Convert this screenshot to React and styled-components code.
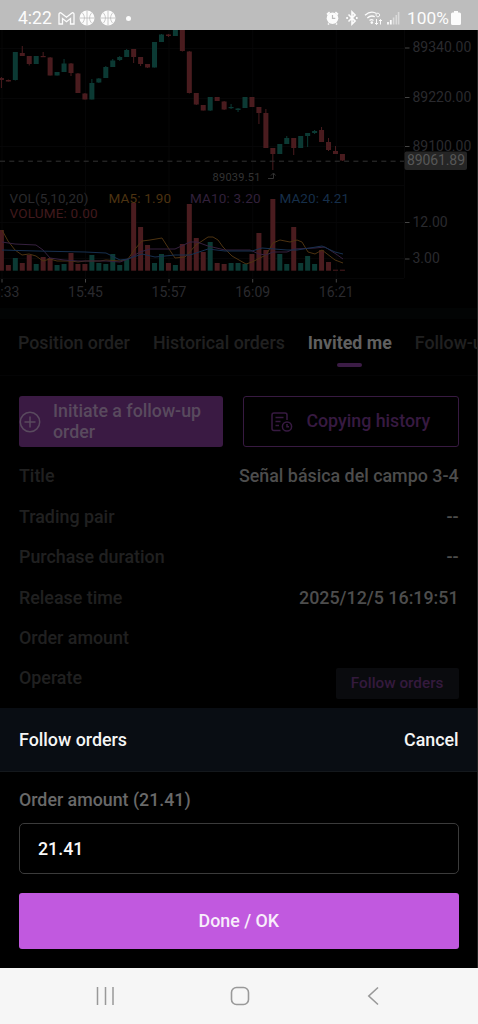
import React from 'react'
import styled, { createGlobalStyle } from 'styled-components'

const green = '#0c3a34'
const red = '#4a1c1f'

// [color, open, close, wick top, wick bottom, volume top]
const candles = [
  ['r', 78, 80, 77, 88, 230],
  ['r', 80, 81.5, 79.5, 81.5, 265],
  ['g', 52, 80, 52, 80.5, 258],
  ['r', 53, 56, 46, 56, 263],
  ['r', 56, 64, 56, 65.5, 255],
  ['g', 56, 64, 56, 64, 264],
  ['r', 56, 57.2, 52, 57, 257],
  ['r', 57.5, 75.5, 57, 75.5, 258],
  ['g', 72, 75.5, 72, 75.5, 265],
  ['g', 63.5, 72, 59, 72, 264],
  ['r', 63.5, 73, 63, 76, 253],
  ['r', 73.5, 93, 73, 93, 264],
  ['r', 93.5, 99.5, 93, 99.5, 264],
  ['g', 83, 99.5, 79, 99.5, 255],
  ['g', 78.5, 82.5, 78, 83, 263],
  ['g', 67, 78, 66, 78, 264],
  ['g', 60.5, 67, 59, 67, 254],
  ['g', 57, 60, 56, 61, 265],
  ['g', 50, 57, 49, 57, 259],
  ['r', 49, 57, 49, 63, 203],
  ['r', 57, 64, 57, 66, 227],
  ['r', 64, 67.5, 64, 68, 245],
  ['g', 42, 67.5, 42, 67.5, 263],
  ['g', 34.5, 42, 34, 42, 254],
  ['r', 34.5, 36, 34, 37, 263],
  ['g', 30, 36, 30, 36, 265],
  ['r', 30, 51, 30, 51.5, 244],
  ['r', 51.5, 93, 51, 93.5, 204],
  ['r', 93, 104.5, 93, 105, 238],
  ['r', 105, 110.5, 105, 110.5, 252],
  ['g', 97, 110.5, 97, 111, 242],
  ['r', 97, 101, 97, 101, 263],
  ['r', 101.5, 109.5, 101, 110, 264],
  ['g', 107, 108.2, 104, 109, 263],
  ['g', 108.5, 110, 108, 112, 263],
  ['g', 97, 108, 97, 108, 264],
  ['r', 97, 107, 97, 107, 254],
  ['r', 107, 113, 107, 124, 233],
  ['r', 113, 148, 109, 148, 250],
  ['r', 148, 154, 148, 170, 199],
  ['g', 144, 154, 144, 154, 254],
  ['g', 138, 144, 136, 144, 264],
  ['r', 138, 148, 138, 155, 227],
  ['g', 136, 148, 136, 148, 263],
  ['g', 133, 136, 133, 147, 256],
  ['g', 131, 133, 130, 134, 264],
  ['r', 130, 142, 127, 142, 250],
  ['r', 142, 150, 138, 151, 262],
  ['r', 151, 154, 146, 154, 269.7],
  ['r', 154, 160.5, 154, 161, 269.7],
]

const priceLabels = [
  { y: 47, text: '89340.00' },
  { y: 96.5, text: '89220.00' },
  { y: 145.5, text: '89100.00' },
  { y: 221.5, text: '12.00' },
  { y: 258, text: '3.00' },
]

const timeLabels = [
  { x: 2, text: '15:33' },
  { x: 85.5, text: '15:45' },
  { x: 169, text: '15:57' },
  { x: 252.7, text: '16:09' },
  { x: 336.3, text: '16:21' },
]

const ma5 = '2,230 8,241 15,250 22,255 29,254 36,256 43,261 50,259 57,261 71,261 78,262 85,261 100,261 106,260 120,261 128,259 135,249 142,241 150,240 162,238 169,249 175,258 185,257 196,245 208,237 213,237 218,240 223,247 232,256 246,264 252,262 266,255 273,243 280,240 290,242 297,240 302,242 308,252 315,254 322,250 335,260 343,263'
const ma10 = '2,242 15,244 36,245 43,250 50,258 64,260 78,261 106,261 120,262 128,259 140,252 150,249 175,249 190,242 197,242 208,246 225,250 250,250 259,254 266,255 273,252 287,252 294,249 315,248 325,247 336,254 343,259'
const ma20 = '2,250 36,251 85,252 106,253 120,260 128,259 142,254 155,257 175,255 190,255 208,249 225,251 252,251 262,248 287,250 297,250 310,248 322,246 335,252 343,254'

const tabs = [
  { title: 'Position order' },
  { title: 'Historical orders' },
  { title: 'Invited me', active: true },
  { title: 'Follow-up' },
]

const details = [
  { label: 'Title', value: 'Señal básica del campo 3-4' },
  { label: 'Trading pair', value: '--' },
  { label: 'Purchase duration', value: '--' },
  { label: 'Release time', value: '2025/12/5 16:19:51' },
  { label: 'Order amount', value: '' },
]

function Ball() {
  return (
    <svg width="16" height="16" viewBox="0 0 16 16">
      <circle cx="8" cy="8" r="7.5" fill="#fcfcfc" />
      <path
        d="M8 .5v15M.5 8h15M3 2.6c3.2 3 3.2 7.8 0 10.8M13 2.6c-3.2 3-3.2 7.8 0 10.8"
        fill="none"
        stroke="#bdbdbd"
        strokeWidth="0.8"
      />
    </svg>
  )
}

function StatusIcons() {
  return (
    <svg width="78" height="18" viewBox="326 9 78 18" fill="none" stroke="#fcfcfc">
      {/* alarm */}
      <circle cx="332.5" cy="18.2" r="5.8" fill="#fcfcfc" stroke="none" />
      <path d="M327 14.500l2.600-2.300M338 14.500l-2.600-2.300M329 23.500l-1 1M336 23.500l1 1" strokeWidth="1.7" />
      <path d="M332.500 15v3.400h2.800" stroke="#bdbdbd" strokeWidth="1.2" />
      {/* bluetooth */}
      <path d="M348.500 14.500l6.600 6.600-3.100 3v-12.200l3.100 3-6.600 6.600" strokeWidth="1.6" />
      <path d="M346.300 18h1.600M356 18h1.600" strokeWidth="1.8" />
      {/* wifi */}
      <path d="M365 15.300c4-3.700 8.500-3.700 11.500-1.800M367.300 18c2.600-2.300 5.500-2.300 7.500-1.200M369.500 20.600c1.300-1.100 2.800-1.100 4-.2" strokeWidth="1.3" />
      <circle cx="371.8" cy="22.6" r="1.3" fill="#fcfcfc" stroke="none" />
      <path d="M377.800 16.800a1.800 1.800 0 1 1 .1 0zM376.500 19v5.500M374.900 22.900l1.600 1.600 1.600-1.600M380.500 24.500v-5M379 21l1.500-1.500 1.500 1.500" strokeWidth="1" />
      {/* signal */}
      <path d="M388 24.500v-2.500M390.800 24.500v-4.500" strokeWidth="1.8" />
      <path d="M393.600 24.500v-7M396.300 24.500v-9.500M398.600 24.500v-12.500" strokeWidth="1.6" opacity="0.45" />
    </svg>
  )
}

function Chart() {
  return (
    <ChartSvg viewBox="0 30 478 278">
      <g stroke="#060607">
        <path d="M2 30V278M85.500 30V278M169 30V278M252.700 30V278M336.300 30V278M404.500 30V278" />
        <path d="M0 48.500H404M0 98.500H404M0 146.500H404M0 185.500H404M0 222.500H404M0 258.500H404M0 278.500H404" />
      </g>
      {candles.map(([color, top, bottom, high, low, vol], i) => {
        const x = 1.4 + i * 6.96
        return (
          <g key={i} fill={color === 'g' ? green : red}>
            <rect x={x - 2.5} y={top} width="5" height={bottom - top} />
            <rect x={x - 0.5} y={high} width="1" height={low - high} />
            <rect x={x - 2.5} y={vol} width="5" height={270.7 - vol} />
          </g>
        )
      })}
      <g fill="none" strokeLinejoin="round">
        <polyline points={ma5} stroke="#4d3311" />
        <polyline points={ma10} stroke="#36213f" />
        <polyline points={ma20} stroke="#17304f" />
      </g>
      <path d="M0 161.200H404" stroke="#333" strokeDasharray="5 4.300" />
      <g fontSize="14" fill="#2a2a2e">
        {priceLabels.map(({ y, text }) => (
          <g key={text}>
            <path d={`M405 ${y + 1}h4.500`} stroke="#444" />
            <text x="412.5" y={y + 5.3}>{text}</text>
          </g>
        ))}
        {timeLabels.map(({ x, text }) => (
          <g key={text}>
            <path d={`M${x} 279v3.500`} stroke="#444" />
            <text x={x} y="297.3" textAnchor="middle">{text}</text>
          </g>
        ))}
      </g>
      <g fontSize="13.5">
        <text x="9.5" y="202.8" fill="#2a2a2d" textLength="79">VOL(5,10,20)</text>
        <text x="108.5" y="202.8" fill="#4d3311" textLength="62.5">MA5: 1.90</text>
        <text x="190" y="202.8" fill="#32203b" textLength="70.5">MA10: 3.20</text>
        <text x="279.5" y="202.8" fill="#162f4a" textLength="69.5">MA20: 4.21</text>
        <text x="9.5" y="218.3" fill="#401a1d" textLength="88">VOLUME: 0.00</text>
      </g>
      <text x="212.5" y="181" fontSize="11" fill="#333" textLength="48">89039.51</text>
      <path d="M268 178.500h5.500v-5M271 175.500l2.500-2.500 2 2.500" stroke="#333" fill="none" />
      <rect x="404.5" y="151.5" width="62.5" height="18.5" rx="2" fill="#252525" />
      <text x="407" y="165.3" fontSize="14" fill="#575757" textLength="58">89061.89</text>
    </ChartSvg>
  )
}

function App() {
  return (
    <Phone>
      <GlobalStyle />
      <StatusBar>
        <Clock>4:22</Clock>
        <svg width="17" height="13" viewBox="0 0 17 13">
          <path
            d="M1 12V2.200C1 .8 2.500.4 3.400 1.200l5.100 4 5.100-4c.9-.8 2.400-.4 2.400 1V12h-3.500V6.500l-4 3.200-4-3.200V12z"
            fill="none"
            stroke="#fcfcfc"
            strokeWidth="1.3"
          />
        </svg>
        <Ball />
        <Ball />
        <Dot />
        <StatusRight>
          <StatusIcons />
          <Battery>100%</Battery>
          <svg width="10" height="14" viewBox="0 0 10 14">
            <path d="M3 0h4v1.500h1.500Q10 1.500 10 3v9.500q0 1.500-1.500 1.500h-7Q0 14 0 12.500V3q0-1.500 1.500-1.500H3z" fill="#fcfcfc" />
          </svg>
        </StatusRight>
      </StatusBar>
      <Screen>
        <Chart />
        <Divider />
        <Tabs>
          {tabs.map(({ title, active }) => (
            <Tab key={title} $active={active}>{title}</Tab>
          ))}
        </Tabs>
        <Actions>
          <InitiateButton>
            <svg width="22" height="22" viewBox="0 0 22 22" fill="none" stroke="#594a5e" strokeWidth="1.5">
              <circle cx="11" cy="11" r="9.7" />
              <path d="M11 5.500v11M5.500 11h11" />
            </svg>
            <span>Initiate a follow-up order</span>
          </InitiateButton>
          <HistoryButton>
            <svg width="22" height="20" viewBox="0 0 22 20" fill="none" stroke="#371a41" strokeWidth="1.5">
              <path d="M9.500 18.500H3q-2 0-2-2V3q0-2 2-2h11q2 0 2 2v5M4.500 5.500h8M4.500 9.500h5M4.500 13.500h3.500" />
              <circle cx="16" cy="14.5" r="4.6" />
              <path d="M16 12v2.800h2" />
            </svg>
            <span>Copying history</span>
          </HistoryButton>
        </Actions>
        <Details>
          {details.map(({ label, value }) => (
            <Row key={label}>
              <Label>{label}</Label>
              <Value>{value}</Value>
            </Row>
          ))}
          <Row>
            <Label>Operate</Label>
            <FollowButton>Follow orders</FollowButton>
          </Row>
        </Details>
      </Screen>
      <Sheet>
        <SheetHead>
          <span>Follow orders</span>
          <span>Cancel</span>
        </SheetHead>
        <SheetBody>
          <AmountLabel>Order amount (21.41)</AmountLabel>
          <AmountInput defaultValue="21.41" />
          <DoneButton>Done / OK</DoneButton>
        </SheetBody>
      </Sheet>
      <NavBar>
        <svg width="19" height="20" viewBox="0 0 19 20" stroke="#999" strokeWidth="1.5">
          <path d="M1.500 1v18M9.500 1v18M17 1v18" />
        </svg>
        <svg width="20" height="20" viewBox="0 0 20 20" fill="none" stroke="#999" strokeWidth="1.6">
          <rect x="1.5" y="1.5" width="17" height="17" rx="5" />
        </svg>
        <svg width="19" height="20" viewBox="0 0 19 20" fill="none" stroke="#999" strokeWidth="1.6">
          <path d="M14 1.500L4.800 10l9.200 8.500" />
        </svg>
      </NavBar>
    </Phone>
  )
}

const GlobalStyle = createGlobalStyle`
* {
  box-sizing: border-box;
}
body {
  margin: 0;
  background: #000;
  font-family: Roboto, sans-serif;
}
button, input {
  font-family: inherit;
}
`
const Phone = styled.div`
width: 478px;
height: 1024px;
display: flex;
flex-direction: column;
overflow: hidden;
`
const StatusBar = styled.div`
height: 30px;
flex-shrink: 0;
display: flex;
align-items: center;
padding: 6px 17px 0 18px;
background: #bdbdbd;
color: #fcfcfc;

svg {
  flex-shrink: 0;
}
svg + svg {
  margin-left: 4.5px;
}
`
const Clock = styled.span`
width: 39.5px;
font-size: 17.5px;
`
const Dot = styled.i`
width: 5px;
height: 5px;
margin-left: 10.5px;
border-radius: 50%;
background: #fcfcfc;
`
const StatusRight = styled.div`
display: flex;
align-items: center;
margin-left: auto;
`
const Battery = styled.span`
width: 42px;
margin: 0 2px 0 3px;
font-size: 17.3px;
white-space: nowrap;
`
const Screen = styled.div`
height: 678px;
flex-shrink: 0;
overflow: hidden;
background: #000;
border-right: 1px solid #222;
`
const ChartSvg = styled.svg`
display: block;
width: 478px;
height: 278px;
`
const Divider = styled.div`
height: 11px;
background: #020404;
`
const Tabs = styled.div`
height: 57px;
display: flex;
gap: 23px;
padding: 0 18px;
overflow: hidden;
border-bottom: 1px solid #040405;
`
const Tab = styled.div`
display: flex;
flex-direction: column;
align-items: center;
padding-top: 13px;
font-size: 17.8px;
line-height: 22px;
font-weight: ${(props) => (props.$active ? 700 : 500)};
color: ${(props) => (props.$active ? '#606060' : '#202020')};
white-space: nowrap;

&::after {
  content: '';
  width: 25px;
  height: 4px;
  margin-top: 9px;
  border-radius: 2px;
  background: ${(props) => (props.$active ? '#3b1c45' : 'transparent')};
}
`
const Actions = styled.div`
display: flex;
justify-content: space-between;
padding: 20px 18.4px 0 19px;
`
const Button = styled.button`
height: 51px;
display: flex;
align-items: center;
padding: 0;
border: 0;
border-radius: 3px;
font-size: 17.8px;
line-height: 21px;
font-weight: 500;

span {
  margin-top: -2px;
}
`
const InitiateButton = styled(Button)`
width: 203.5px;
gap: 12px;
background: #3a1a43;
color: #594a5e;
text-align: left;

svg {
  flex-shrink: 0;
}
`
const HistoryButton = styled(Button)`
width: 215.6px;
justify-content: center;
gap: 13px;
background: transparent;
border: 1px solid #371a41;
color: #371a41;
`
const Details = styled.div`
padding: 10px 18.4px 0 19px;
`
const Row = styled.div`
height: 40.4px;
display: flex;
justify-content: space-between;
padding-top: 8.4px;
font-size: 17.85px;
line-height: 22px;
font-weight: 500;
`
const Label = styled.span`
color: #202020;
`
const Value = styled.span`
color: #4d4d4d;
`
const FollowButton = styled.button`
width: 123px;
height: 31px;
margin-top: 1px;
padding: 0 0 1px;
border: 0;
border-radius: 2px;
background: #0a0b0e;
color: #341a3d;
font-size: 15.3px;
font-weight: 500;
`
const Sheet = styled.div`
height: 260px;
flex-shrink: 0;
background: #000;
border-right: 1px solid #222;
`
const SheetHead = styled.div`
height: 64px;
display: flex;
align-items: center;
justify-content: space-between;
padding: 0 18.4px 1px 19px;
background: #090d13;
border-bottom: 1px solid #14181c;
color: #f5f5f5;
font-size: 17.85px;
font-weight: 500;
`
const SheetBody = styled.div`
display: flex;
flex-direction: column;
padding: 17px 18.4px 0 19px;
`
const AmountLabel = styled.label`
color: #696969;
font-size: 17.8px;
line-height: 22px;
font-weight: 500;
`
const AmountInput = styled.input`
height: 51px;
margin-top: 12px;
padding: 0 18px 1px;
border: 1px solid #3b3b3b;
border-radius: 5px;
background: #000;
color: #f8f8f8;
font-size: 17.8px;
font-weight: 500;
outline: none;
`
const DoneButton = styled.button`
height: 56px;
margin-top: 19px;
padding-bottom: 3px;
border: 0;
border-radius: 3px;
background: #c159df;
color: #f8eefb;
font-size: 17.8px;
font-weight: 500;
`
const NavBar = styled.div`
height: 56px;
flex-shrink: 0;
display: flex;
align-items: center;
justify-content: space-between;
padding: 0 95px 1px 96px;
background: #f6f6f6;
`

export default App
